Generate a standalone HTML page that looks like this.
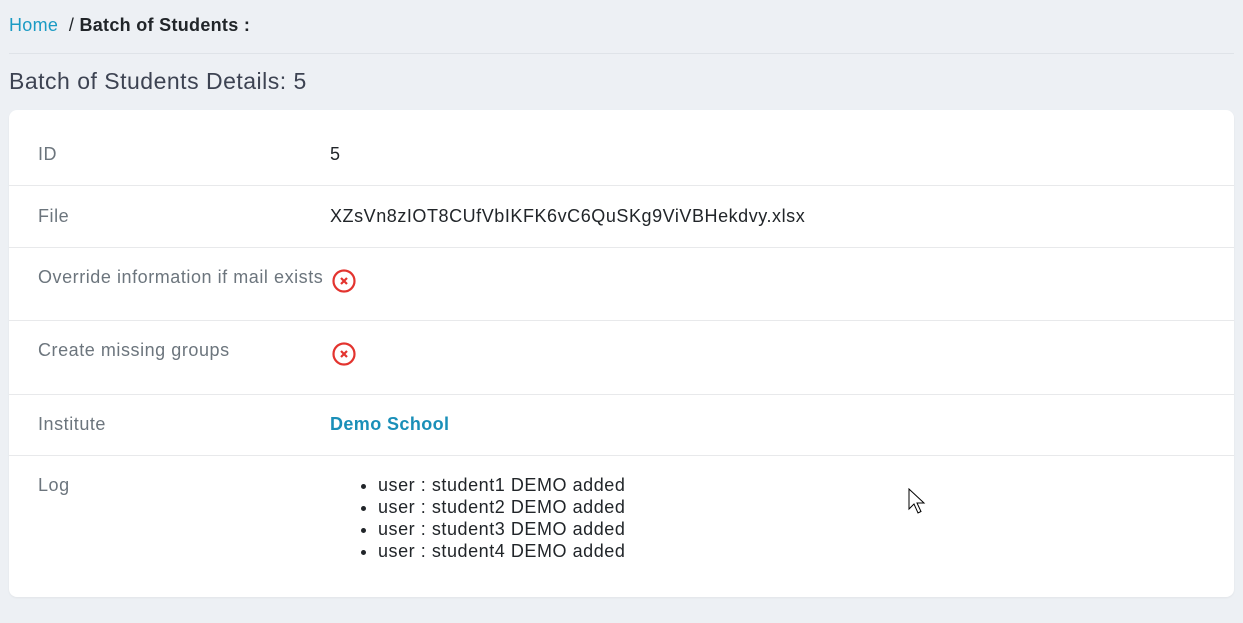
<!DOCTYPE html>
<html><head><style>
body{margin:0;background:#edf0f4;font-family:"Liberation Sans",sans-serif;width:1243px;height:623px;overflow:hidden;position:relative}
.a{position:absolute;white-space:nowrap}
.card{position:absolute;left:9px;top:110px;width:1225px;height:487px;background:#fff;border-radius:8px;box-shadow:0 1px 2px rgba(0,0,0,.05)}
.hr{position:absolute;left:0;width:1225px;height:1px;background:#e8e9eb}
.l{color:#6c757d;font-size:18px;letter-spacing:.55px}
.v{color:#212529;font-size:18px;letter-spacing:.55px}
</style></head><body>
<div class="a" style="left:9px;top:15px;font-size:18px;letter-spacing:.3px;color:#212529"><span style="color:#1a9bc4">Home</span> &nbsp;/ <b>Batch of Students :</b></div>
<div class="a" style="left:9px;top:53px;width:1225px;height:1px;background:#dfe3e8"></div>
<div class="a" style="left:9px;top:68px;font-size:23px;letter-spacing:.5px;color:#3d4352">Batch of Students Details: 5</div>
<div class="card">
<div class="hr" style="top:75px"></div>
<div class="hr" style="top:137px"></div>
<div class="hr" style="top:210px"></div>
<div class="hr" style="top:284px"></div>
<div class="hr" style="top:345px"></div>
<div class="a l" style="left:29px;top:34px">ID</div>
<div class="a v" style="left:321px;top:34px">5</div>
<div class="a l" style="left:29px;top:96px">File</div>
<div class="a v" style="left:321px;top:96px">XZsVn8zIOT8CUfVbIKFK6vC6QuSKg9ViVBHekdvy.xlsx</div>
<div class="a l" style="left:29px;top:157px">Override information if mail exists</div>
<svg class="a" style="left:322px;top:159px" width="26" height="26" viewBox="0 0 26 26"><circle cx="13" cy="12" r="10.5" fill="none" stroke="#e3342f" stroke-width="2.2"/><path d="M10 9l6 6M16 9l-6 6" stroke="#e3342f" stroke-width="2.2"/></svg>
<div class="a l" style="left:29px;top:230px">Create missing groups</div>
<svg class="a" style="left:322px;top:232px" width="26" height="26" viewBox="0 0 26 26"><circle cx="13" cy="12" r="10.5" fill="none" stroke="#e3342f" stroke-width="2.2"/><path d="M10 9l6 6M16 9l-6 6" stroke="#e3342f" stroke-width="2.2"/></svg>
<div class="a l" style="left:29px;top:304px">Institute</div>
<div class="a" style="left:321px;top:304px;font-size:18px;letter-spacing:.4px;font-weight:bold;color:#1a8fb8">Demo School</div>
<div class="a l" style="left:29px;top:365px">Log</div>
<ul class="a v" style="left:329px;top:364px;margin:0;padding-left:40px;line-height:22px">
<li>user : student1 DEMO added</li><li>user : student2 DEMO added</li><li>user : student3 DEMO added</li><li>user : student4 DEMO added</li></ul>
</div>
<svg class="a" style="left:908px;top:488px" width="20" height="28" viewBox="0 0 20 28"><path d="M1 1v20l5-5 4 9 3-1.5-4-8.5h7z" fill="#fff" stroke="#000" stroke-width="1"/></svg>
</body></html>
